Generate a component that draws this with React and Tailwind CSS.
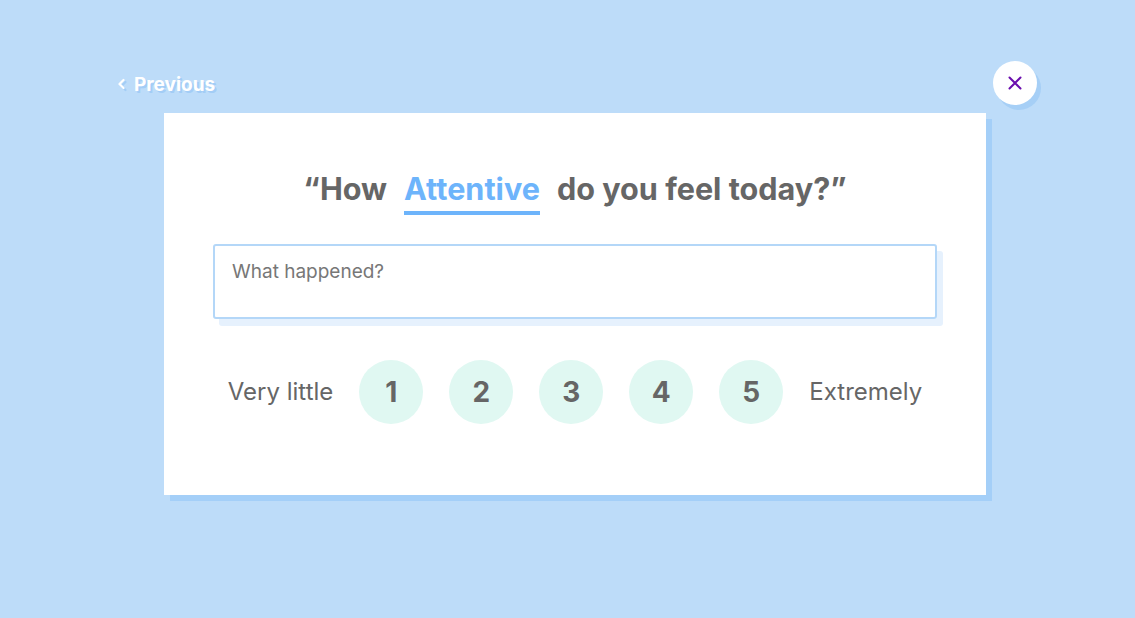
import React from "react";

export default function App() {
  return (
    <div
      className="w-full h-[618px] bg-[#bddcf9] overflow-hidden"
      style={{ fontFamily: "Inter, 'Noto Sans', sans-serif" }}
    >
      <div className="ml-[164px] w-[822px] pt-[61px]">
        {/* header */}
        <div className="flex items-center justify-between h-[44px] mb-[8px] -ml-[47px] -mr-[51px]">
          <div className="flex items-center gap-[8px] pt-[5px] text-white font-bold text-[19px] [text-shadow:2px_2px_0_#a3cdf6]">
            <svg width="9" height="12" viewBox="0 0 9 12" className="mt-[-3px]" style={{ filter: "drop-shadow(2px 2px 0 #a3cdf6)" }}>
              <path d="M6.5 2 L2.5 6 L6.5 10" stroke="white" strokeWidth="2.2" fill="none" strokeLinecap="round" strokeLinejoin="round" />
            </svg>
            <span>Previous</span>
          </div>
          <div className="w-[44px] h-[44px] rounded-full bg-white flex items-center justify-center shadow-[4px_5px_0_0_#a6cff6]">
            <svg width="14" height="14" viewBox="0 0 14 14">
              <path d="M1.5 1.5 L12.5 12.5 M12.5 1.5 L1.5 12.5" stroke="#6a0dad" strokeWidth="2" strokeLinecap="round" />
            </svg>
          </div>
        </div>

        {/* card */}
        <div className="bg-white h-[382px] shadow-[6px_6px_0_0_#a4cff8] px-[49px] pt-[58px]">
          <div className="flex justify-center items-start gap-[17px] text-[30.6px] leading-[35px] font-bold text-[#666666]">
            <span>“How</span>
            <span className="text-[#6db4fb] border-b-4 border-[#6db4fb] pb-[5px]">Attentive</span>
            <span>do you feel today?”</span>
          </div>

          <div className="mt-[29px] h-[75px] border-2 border-[#b4d7f8] rounded-[3px] shadow-[6px_7px_0_0_#e6f1fd] px-[17px] pt-[14px]">
            <div className="text-[19px] leading-[24px] text-[#777777]">What happened?</div>
          </div>

          <div className="mt-[41px] flex items-center justify-center gap-[26px] text-[#666666]">
            <span className="text-[24px] leading-[30px]">Very little</span>
            {[1, 2, 3, 4, 5].map((n) => (
              <div
                key={n}
                className="w-[64px] h-[64px] rounded-full bg-[#e0f8f2] flex items-center justify-center text-[28px] font-bold"
              >
                {n}
              </div>
            ))}
            <span className="text-[24px] leading-[30px]">Extremely</span>
          </div>
        </div>
      </div>
    </div>
  );
}
